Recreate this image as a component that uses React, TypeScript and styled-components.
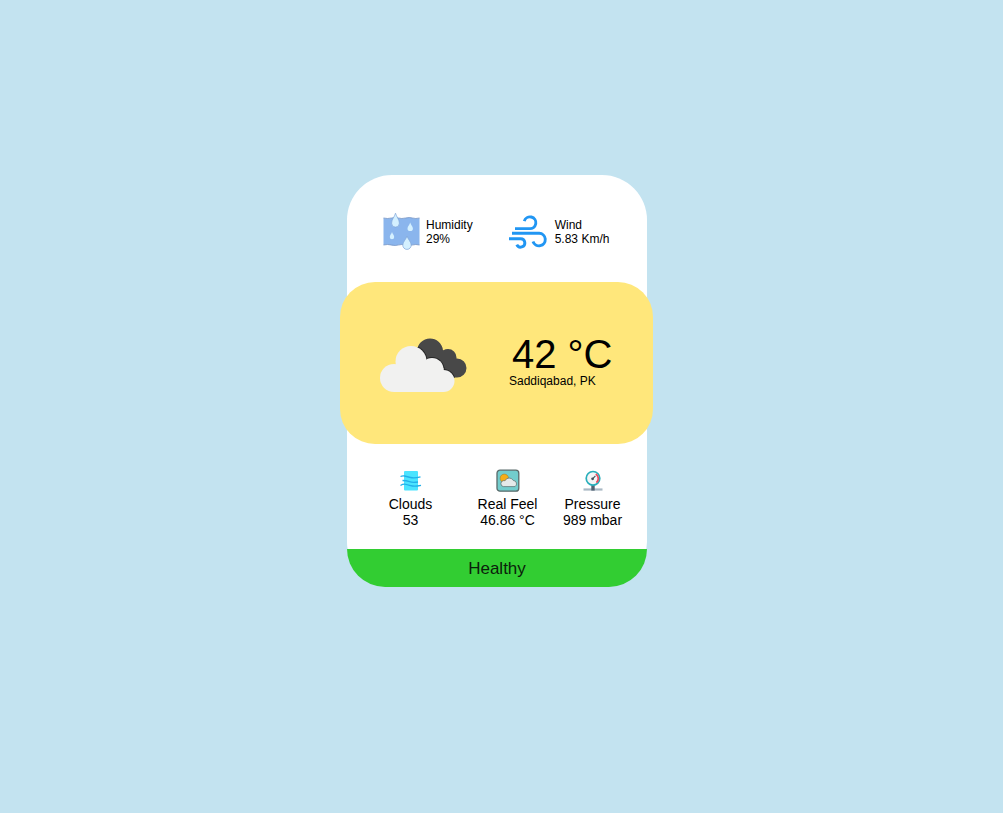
import React from "react";
import styled, { createGlobalStyle } from "styled-components";

const GlobalStyle = createGlobalStyle`
  * { box-sizing: border-box; }
  body {
    margin: 0;
    background: #c3e3f0;
    color: #000;
    font-family: Arial, "Liberation Sans", sans-serif;
  }
  svg { display: block; flex: none; }
`;

const Page = styled.main`
  min-height: 100vh;
  display: flex;
  align-items: center;
  justify-content: center;
  padding: 0 9px 51px 0;
`;

const Card = styled.article`
  width: 300px;
  border-radius: 45px;
  background: #fff;
`;

const TopStats = styled.section`
  display: flex;
  gap: 36px;
  padding: 37px 36px 32px;
`;

const Stat = styled.div<{ $gap: number }>`
  display: flex;
  align-items: center;
  gap: ${(p) => p.$gap}px;
  font-size: 12px;
  line-height: 14px;
  white-space: nowrap;
`;

const StatText = styled.div`
  padding-top: 2px;
`;

const Text = styled.p`
  margin: 0;
`;

const Current = styled.section`
  display: flex;
  align-items: center;
  gap: 41px;
  height: 162px;
  margin: 0 -6px 0 -7px;
  padding: 0 40px;
  border-radius: 35px;
  background: #ffe77b;
`;

const Reading = styled.div`
  white-space: nowrap;
  padding-bottom: 4px;
`;

const Temperature = styled.h1`
  margin: 0;
  padding-left: 3px;
  font-size: 40px;
  line-height: 40px;
  font-weight: 400;
`;

const Place = styled.p`
  margin: 0;
  font-size: 12px;
  line-height: 14px;
`;

const Details = styled.section`
  display: grid;
  grid-template-columns: 97fr 97fr 73fr;
  padding: 25px 18px 21px 15px;
`;

const Detail = styled.div`
  display: flex;
  flex-direction: column;
  align-items: center;
  gap: 3px;
  font-size: 14px;
  line-height: 16px;
  text-align: center;
  white-space: nowrap;
`;

const Status = styled.footer`
  padding: 10px 0 8px;
  border-radius: 0 0 45px 45px;
  background: #32cd32;
  color: #0b200b;
  font-size: 17px;
  line-height: 20px;
  text-align: center;
`;

const HumidityIcon = () => (
  <svg width="37" height="38" viewBox="0 0 37 38" aria-hidden="true">
    <path d="M.5 6q4 1 8 0t7 0 7 0 7 0 7 0V33q-4-1-8 0t-7 0-7 0-7 0-7 0Z" fill="#8ab5ed" />
    <path d="M.5 6q4 1 8 0t7 0 7 0 7 0 7 0M.5 33q4-1 8 0t7 0 7 0 7 0 7 0" fill="none" stroke="#7795c4" strokeWidth=".8" />
    <g fill="#d4f0ff">
      <path d="M12.500 1.200C11.500 5 8.600 7.500 8.600 11.200a3.900 3.900 0 0 0 7.800 0C16.400 7.500 13.500 5 12.500 1.200Z" stroke="#7fa5d8" strokeWidth=".7" />
      <path d="M24 24c-1 3.500-4.200 5.800-4.200 9.200a4.200 4.200 0 0 0 8.400 0c0-3.400-3.200-5.700-4.200-9.200Z" stroke="#7fa5d8" strokeWidth=".7" />
      <path d="M27.200 10.500c-.7 2.500-2.700 4-2.700 5.900a2.700 2.700 0 0 0 5.400 0c0-1.900-2-3.400-2.700-5.900ZM9 20c-.6 2-2.200 3.300-2.200 5a2.200 2.200 0 0 0 4.400 0C11.200 23.300 9.600 22 9 20Z" />
    </g>
  </svg>
);

const WindIcon = () => (
  <svg width="38" height="38" viewBox="0 0 38 38" fill="none" stroke="#2196f3" strokeWidth="2.900" aria-hidden="true">
    <path d="M6 16.600H20.200a5.900 5.900 0 1 0-4.900-7.500" />
    <path d="M3 21.200H30.200a6.300 6.300 0 1 1-6.200 8.300" />
    <path d="M0 26.700H11.500a4.200 4.200 0 1 1-3.700 5.900" />
  </svg>
);

const CloudyIcon = () => (
  <svg width="88" height="58" viewBox="0 0 88 58" aria-hidden="true">
    <defs>
      <g id="front-cloud">
        <circle cx="14" cy="44" r="14" />
        <circle cx="31" cy="27.500" r="15.500" />
        <circle cx="52" cy="35.500" r="11.500" />
        <circle cx="63.500" cy="47" r="11" />
        <path d="M14 34H63.500V58H14Z" />
      </g>
      <clipPath id="back-cloud">
        <circle cx="50" cy="17.500" r="13" />
        <circle cx="68" cy="23.500" r="8.500" />
        <circle cx="77" cy="34" r="9.500" />
        <path d="M40 20L60 13 77 30V43.500H50Z" />
      </clipPath>
    </defs>
    <g clipPath="url(#back-cloud)">
      <path d="M0 0H88V58H0Z" fill="#484848" />
      <use href="#front-cloud" fill="#262626" stroke="#262626" strokeWidth="2" />
    </g>
    <use href="#front-cloud" fill="#f1f1f0" />
  </svg>
);

const CloudsIcon = () => (
  <svg width="24" height="24" viewBox="0 0 24 24" aria-hidden="true">
    <rect x="5" y="2" width="14" height="19.500" rx="1" fill="#4be4ff" />
    <path d="M1.500 7.500q2-1 4-.5t6 1.500 10-.7M3.500 11.500q4 0 7 1.200t8.500.3M1.500 16.500q3-2 6-1t6 1.500 8.500-.7" fill="none" stroke="#22b0ea" strokeWidth="1.300" />
  </svg>
);

const RealFeelIcon = () => (
  <svg width="24" height="24" viewBox="0 0 24 24" aria-hidden="true">
    <rect x="1" y="1.200" width="21.800" height="21" rx="3" fill="#72cdcd" stroke="#596a6a" strokeWidth="1.300" />
    <circle cx="8.300" cy="9.300" r="4.200" fill="#f7ad16" stroke="#8d7834" strokeWidth=".5" />
    <path d="M7.500 17.600a3 3 0 0 1-.3-5.900q1.200-.2 1.800.1a4.600 4.600 0 0 1 8.300-.3 3.300 3.300 0 0 1 1.700 6.100Z" fill="#e4eaea" stroke="#596a6a" strokeWidth=".7" />
  </svg>
);

const PressureIcon = () => (
  <svg width="24" height="24" viewBox="0 0 24 24" aria-hidden="true">
    <path d="M2.500 20.500H21.500" stroke="#a9b8c4" strokeWidth="2.200" />
    <path d="M10.300 16h3.400v5.600h-3.400Z" fill="#526373" />
    <circle cx="12" cy="9.300" r="6.800" fill="#f5f6f7" stroke="#28aeba" strokeWidth="1.700" />
    <path d="M14.800 5a5.300 5.300 0 0 1 .6 8.600" fill="none" stroke="#ee4a5e" strokeWidth="1.800" />
    <circle cx="11.600" cy="9.800" r="1.400" fill="#46515c" />
    <path d="M11.600 9.800l2.800-3" stroke="#46515c" strokeWidth="1.100" />
  </svg>
);

const topStats = [
  { label: "Humidity", value: "29%", icon: <HumidityIcon />, gap: 6 },
  { label: "Wind", value: "5.83 Km/h", icon: <WindIcon />, gap: 8 },
];

const details = [
  { label: "Clouds", value: "53", icon: <CloudsIcon /> },
  { label: "Real Feel", value: "46.86 °C", icon: <RealFeelIcon /> },
  { label: "Pressure", value: "989 mbar", icon: <PressureIcon /> },
];

export default function App() {
  return (
    <>
      <GlobalStyle />
      <Page>
        <Card>
          <TopStats>
            {topStats.map((s) => (
              <Stat key={s.label} $gap={s.gap}>
                {s.icon}
                <StatText>
                  <Text>{s.label}</Text>
                  <Text>{s.value}</Text>
                </StatText>
              </Stat>
            ))}
          </TopStats>
          <Current>
            <CloudyIcon />
            <Reading>
              <Temperature>42 °C</Temperature>
              <Place>Saddiqabad, PK</Place>
            </Reading>
          </Current>
          <Details>
            {details.map((d) => (
              <Detail key={d.label}>
                {d.icon}
                <div>
                  <Text>{d.label}</Text>
                  <Text>{d.value}</Text>
                </div>
              </Detail>
            ))}
          </Details>
          <Status>Healthy</Status>
        </Card>
      </Page>
    </>
  );
}
